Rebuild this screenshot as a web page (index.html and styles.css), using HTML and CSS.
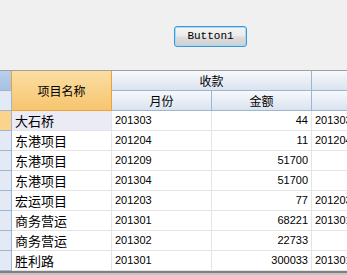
FILE: index.html
```html
<!DOCTYPE html>
<html>
<head>
<meta charset="utf-8">
<link rel="stylesheet" href="styles.css">
</head>
<body>
<div class="top"><button class="btn">Button1</button></div>
<div class="grid">
  <div class="ih1"></div>
  <div class="hname">项目名称</div>
  <div class="h span2">收款</div>
  <div class="h"></div>
  <div class="ih2"></div>
  <div class="h">月份</div>
  <div class="h">金额</div>
  <div class="h"></div>

  <div class="ri sel"></div><div class="c name cur">大石桥</div><div class="c d">201303</div><div class="c d num">44</div><div class="c d">201303</div>
  <div class="ri"></div><div class="c name">东港项目</div><div class="c d">201204</div><div class="c d num">11</div><div class="c d">201204</div>
  <div class="ri"></div><div class="c name">东港项目</div><div class="c d">201209</div><div class="c d num">51700</div><div class="c d"></div>
  <div class="ri"></div><div class="c name">东港项目</div><div class="c d">201304</div><div class="c d num">51700</div><div class="c d"></div>
  <div class="ri"></div><div class="c name">宏运项目</div><div class="c d">201203</div><div class="c d num">77</div><div class="c d">201203</div>
  <div class="ri"></div><div class="c name">商务营运</div><div class="c d">201301</div><div class="c d num">68221</div><div class="c d">201301</div>
  <div class="ri"></div><div class="c name">商务营运</div><div class="c d">201302</div><div class="c d num">22733</div><div class="c d"></div>
  <div class="ri"></div><div class="c name">胜利路</div><div class="c d">201301</div><div class="c d num">300033</div><div class="c d">201301</div>
</div>
<div class="hscroll"></div>
</body>
</html>
```
FILE: styles.css
```css
html, body {
  margin: 0;
  padding: 0;
}
body {
  background: #f0f0f0;
  width: 347px;
  height: 275px;
  overflow: hidden;
  font-family: "Noto Sans CJK SC", sans-serif;
  font-size: 12px;
  color: #000;
}
.top {
  box-sizing: border-box;
  height: 70px;
  padding-top: 26px;
}
.btn {
  display: block;
  margin-left: 174px;
  width: 73px;
  height: 21px;
  box-sizing: border-box;
  border: 1px solid #3a9ad9;
  border-radius: 3px;
  box-shadow: inset 0 0 0 1px #a8d8f4;
  background: linear-gradient(#f4f4f4 0%, #ebebeb 45%, #dcdcdc 55%, #d0d0d0 100%);
  font-family: "Liberation Mono", monospace;
  font-size: 11px;
  color: #000;
  padding: 0;
  line-height: 17px;
}
.grid {
  display: grid;
  grid-template-columns: 12px 100px 100px 100px 100px;
  grid-auto-rows: 20px;
  width: 412px;
  border-top: 1px solid #a0a0a0;
}
.grid > div {
  box-sizing: border-box;
  border-right: 1px solid #e4e4e4;
  border-bottom: 1px solid #e4e4e4;
  white-space: nowrap;
  overflow: hidden;
}
.grid > .ih1 {
  background: linear-gradient(#b9d0ec, #a7c1e3);
  border-color: #9db5cf;
}
.grid > .ih2 {
  background: #e3eaf5;
  border-color: #9db5cf;
}
.grid > .h {
  background: linear-gradient(#f7f9fc, #dae3ef);
  border-color: #9db5cf;
  text-align: center;
  line-height: 19px;
}
.grid > .span2 {
  grid-column: span 2;
}
.grid > .hname {
  grid-row: span 2;
  background: linear-gradient(#fcdea3, #f6c56f);
  border-color: #f0a035;
  box-shadow: -1px 0 0 #f0a035;
  text-align: center;
  line-height: 39px;
  font-size: 12px;
}
.grid > .ri {
  background: #e3eaf5;
  border-color: #9db5cf;
}
.grid > .ri.sel {
  background: #fbd38d;
  border-right-color: #9db5cf;
}
.grid > .c {
  background: #fff;
  padding: 0 3px;
  line-height: 19px;
}
.grid > .name {
  font-size: 13px;
}
.grid > .cur {
  background: #eaebf4;
}
.grid > .d {
  font-family: "Liberation Sans", sans-serif;
  font-size: 11px;
}
.grid > .num {
  text-align: right;
}
.hscroll {
  height: 4px;
  border-top: 2px solid #7f7f7f;
  background: #c6c6c6;
}
```
